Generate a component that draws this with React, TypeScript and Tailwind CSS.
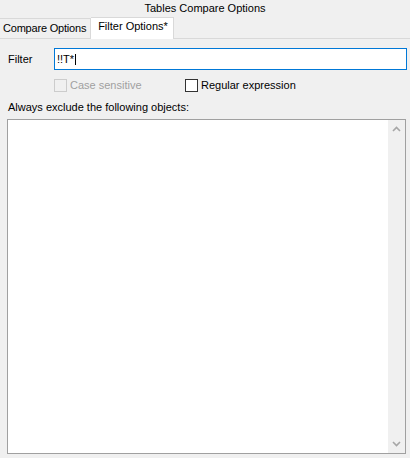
import React from "react";

const Chevron = ({ up }: { up?: boolean }) => (
  <svg width="9" height="6" viewBox="0 0 9 6" className="block">
    <path d={up ? "M1 5 L4.5 1.5 L8 5" : "M1 1 L4.5 4.5 L8 1"} fill="none" stroke="#a6a6a6" strokeWidth="1.6" />
  </svg>
);

const Checkbox = ({ label, disabled }: { label: string; disabled?: boolean }) => (
  <div className="flex items-center h-[13px] whitespace-nowrap">
    <div className={`w-[13px] h-[13px] shrink-0 border ${disabled ? "border-[#cccccc] bg-[#f0f0f0]" : "border-[#333333] bg-white"}`} />
    <span className={`ml-[3px] leading-[13px] ${disabled ? "text-[#a0a0a0]" : "text-black"}`}>{label}</span>
  </div>
);

export default function App() {
  return (
    <div className="w-[410px] h-[458px] bg-[#f0f0f0] font-['Liberation_Sans',Arial,sans-serif] text-[11px] text-black overflow-hidden">
      <div className="h-[17px] flex items-center justify-center leading-[13px]">Tables Compare Options</div>

      <div className="flex items-end h-[21px]">
        <div className="w-[91px] h-[20px] shrink-0 border-t border-r border-[#d9d9d9] bg-[#f0f0f0] flex items-center pl-[3px] leading-[13px] whitespace-nowrap tracking-[-0.2px]">
          Compare Options
        </div>
        <div className="relative w-[83px] h-[22px] shrink-0 -mb-px border-t border-r border-[#d9d9d9] bg-white flex justify-center pt-[2px] pl-[2px] leading-[13px] whitespace-nowrap">
          Filter Options*
        </div>
      </div>

      <div className="border-t border-[#d9d9d9] pt-[9px]">
        <div className="flex items-center h-[22px] pl-[8px]">
          <span className="w-[46px] leading-[13px]">Filter</span>
          <div className="w-[353px] h-[22px] border border-[#0078d7] bg-white flex items-center pl-[2px]">
            <span className="leading-[13px]">!!T*</span>
            <span className="ml-[1px] w-px h-[11px] bg-black" />
          </div>
        </div>

        <div className="flex mt-[9px] pl-[54px]">
          <div className="w-[131px]">
            <Checkbox label="Case sensitive" disabled />
          </div>
          <Checkbox label="Regular expression" />
        </div>

        <div className="mt-[9px] pl-[8px] leading-[13px]">Always exclude the following objects:</div>

        <div className="mt-[5px] ml-[7px] w-[399px] h-[335px] border border-[#a0a0a0] flex">
          <div className="flex-1 bg-white" />
          <div className="w-[17px] bg-[#f0f0f0] flex flex-col justify-between items-center pt-[6px] pb-[6px]">
            <Chevron up />
            <Chevron />
          </div>
        </div>
      </div>
    </div>
  );
}
